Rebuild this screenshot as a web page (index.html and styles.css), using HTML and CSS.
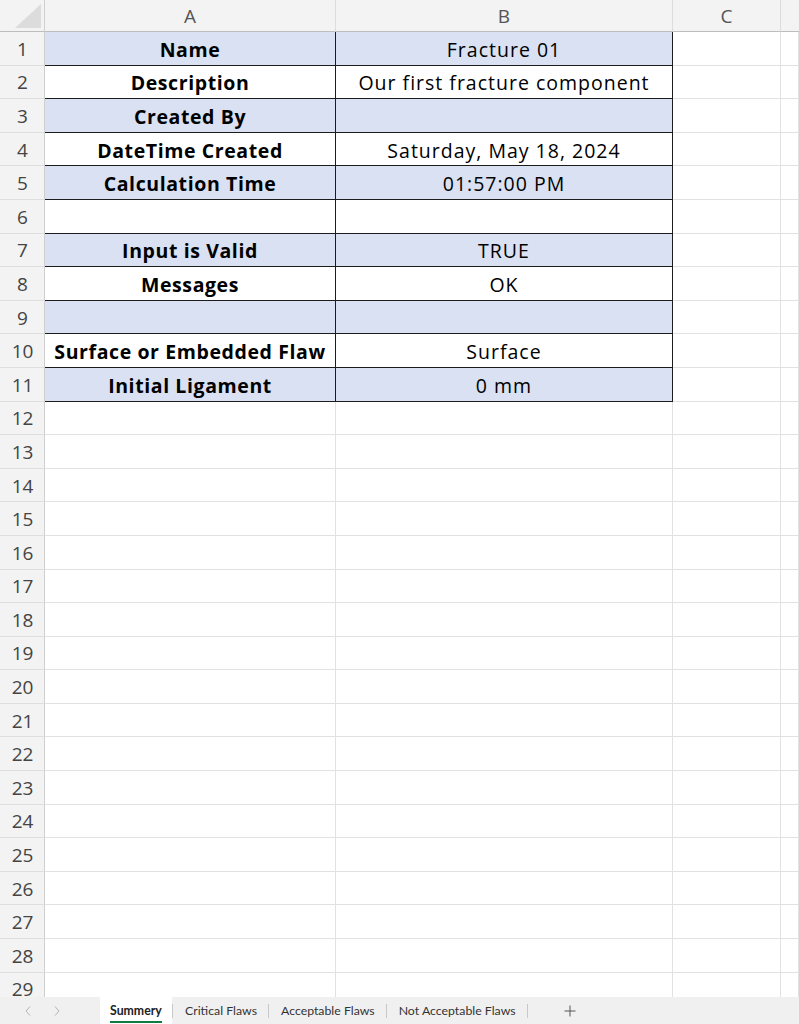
FILE: index.html
```html
<!DOCTYPE html>
<html>
<head>
<meta charset="utf-8">
<link rel="stylesheet" href="styles.css">
</head>
<body>
<div class="app">
  <div class="sheet">
    <div class="corner"><span class="tri"></span></div>
    <div class="colhead">A</div>
    <div class="colhead">B</div>
    <div class="colhead">C</div>
    <div class="colhead last"></div>

    <div class="rowhead">1</div><div class="cell data blue label">Name</div><div class="cell data blue">Fracture 01</div><div class="cell"></div><div class="cell"></div>
    <div class="rowhead">2</div><div class="cell data label">Description</div><div class="cell data">Our first fracture component</div><div class="cell"></div><div class="cell"></div>
    <div class="rowhead">3</div><div class="cell data blue label">Created By</div><div class="cell data blue"></div><div class="cell"></div><div class="cell"></div>
    <div class="rowhead">4</div><div class="cell data label">DateTime Created</div><div class="cell data">Saturday, May 18, 2024</div><div class="cell"></div><div class="cell"></div>
    <div class="rowhead">5</div><div class="cell data blue label">Calculation Time</div><div class="cell data blue">01:57:00 PM</div><div class="cell"></div><div class="cell"></div>
    <div class="rowhead">6</div><div class="cell data label"></div><div class="cell data"></div><div class="cell"></div><div class="cell"></div>
    <div class="rowhead">7</div><div class="cell data blue label">Input is Valid</div><div class="cell data blue">TRUE</div><div class="cell"></div><div class="cell"></div>
    <div class="rowhead">8</div><div class="cell data label">Messages</div><div class="cell data">OK</div><div class="cell"></div><div class="cell"></div>
    <div class="rowhead">9</div><div class="cell data blue label"></div><div class="cell data blue"></div><div class="cell"></div><div class="cell"></div>
    <div class="rowhead">10</div><div class="cell data label">Surface or Embedded Flaw</div><div class="cell data">Surface</div><div class="cell"></div><div class="cell"></div>
    <div class="rowhead">11</div><div class="cell data blue label">Initial Ligament</div><div class="cell data blue">0 mm</div><div class="cell"></div><div class="cell"></div>

    <div class="rowhead">12</div><div class="cell"></div><div class="cell"></div><div class="cell"></div><div class="cell"></div>
    <div class="rowhead">13</div><div class="cell"></div><div class="cell"></div><div class="cell"></div><div class="cell"></div>
    <div class="rowhead">14</div><div class="cell"></div><div class="cell"></div><div class="cell"></div><div class="cell"></div>
    <div class="rowhead">15</div><div class="cell"></div><div class="cell"></div><div class="cell"></div><div class="cell"></div>
    <div class="rowhead">16</div><div class="cell"></div><div class="cell"></div><div class="cell"></div><div class="cell"></div>
    <div class="rowhead">17</div><div class="cell"></div><div class="cell"></div><div class="cell"></div><div class="cell"></div>
    <div class="rowhead">18</div><div class="cell"></div><div class="cell"></div><div class="cell"></div><div class="cell"></div>
    <div class="rowhead">19</div><div class="cell"></div><div class="cell"></div><div class="cell"></div><div class="cell"></div>
    <div class="rowhead">20</div><div class="cell"></div><div class="cell"></div><div class="cell"></div><div class="cell"></div>
    <div class="rowhead">21</div><div class="cell"></div><div class="cell"></div><div class="cell"></div><div class="cell"></div>
    <div class="rowhead">22</div><div class="cell"></div><div class="cell"></div><div class="cell"></div><div class="cell"></div>
    <div class="rowhead">23</div><div class="cell"></div><div class="cell"></div><div class="cell"></div><div class="cell"></div>
    <div class="rowhead">24</div><div class="cell"></div><div class="cell"></div><div class="cell"></div><div class="cell"></div>
    <div class="rowhead">25</div><div class="cell"></div><div class="cell"></div><div class="cell"></div><div class="cell"></div>
    <div class="rowhead">26</div><div class="cell"></div><div class="cell"></div><div class="cell"></div><div class="cell"></div>
    <div class="rowhead">27</div><div class="cell"></div><div class="cell"></div><div class="cell"></div><div class="cell"></div>
    <div class="rowhead">28</div><div class="cell"></div><div class="cell"></div><div class="cell"></div><div class="cell"></div>
    <div class="rowhead">29</div><div class="cell"></div><div class="cell"></div><div class="cell"></div><div class="cell"></div>
  </div>
  <div class="tabbar">
    <div class="nav">
      <svg width="10" height="12" viewBox="0 0 10 12"><path d="M7 1.5 L3 6 L7 10.5" fill="none" stroke="#b4b4b4" stroke-width="1"/></svg>
      <svg width="10" height="12" viewBox="0 0 10 12"><path d="M3 1.5 L7 6 L3 10.5" fill="none" stroke="#b4b4b4" stroke-width="1"/></svg>
    </div>
    <div class="tab active"><span class="tabtext">Summery</span></div>
    <span class="sep"></span>
    <div class="tab">Critical Flaws</div>
    <span class="sep"></span>
    <div class="tab">Acceptable Flaws</div>
    <span class="sep"></span>
    <div class="tab">Not Acceptable Flaws</div>
    <span class="sep"></span>
    <div class="add">
      <svg width="12" height="12" viewBox="0 0 12 12"><path d="M6 0.5 V11.5 M0.5 6 H11.5" stroke="#555" stroke-width="1"/></svg>
    </div>
  </div>
</div>
</body>
</html>
```
FILE: styles.css
```css
* { box-sizing: border-box; }
html, body { margin: 0; padding: 0; background: #fff; }
.app {
  width: 799px;
  height: 1024px;
  display: flex;
  flex-direction: column;
  overflow: hidden;
  font-family: Lato, "Liberation Sans", sans-serif;
}
.sheet {
  flex: 1;
  min-height: 0;
  overflow: hidden;
  display: grid;
  grid-template-columns: 45px 291px 337px 108px 1fr;
  grid-template-rows: 32px repeat(29, 33.6px);
}
.corner {
  background: #f3f3f3;
  border-right: 1px solid #cfcfcf;
  border-bottom: 1px solid #bdbdbd;
  position: relative;
}
.tri {
  position: absolute;
  right: 3px;
  bottom: 3px;
  width: 0;
  height: 0;
  border-left: 26px solid transparent;
  border-bottom: 24px solid #dcdcdc;
}
.colhead {
  background: #f3f3f3;
  border-right: 1px solid #dcdcdc;
  border-bottom: 1px solid #bdbdbd;
  color: #555;
  font-family: "Open Sans", sans-serif;
  font-size: 19px;
  display: flex;
  align-items: center;
  justify-content: center;
  padding-top: 1px;
}
.colhead.last { border-right: none; }
.rowhead {
  background: #f3f3f3;
  border-right: 1px solid #cfcfcf;
  border-bottom: 1px solid #dedede;
  color: #444;
  font-family: "Open Sans", sans-serif;
  font-size: 19px;
  display: flex;
  align-items: center;
  justify-content: center;
  padding-top: 1px;
  padding-left: 1px;
}
.cell {
  border-right: 1px solid #e1e1e1;
  border-bottom: 1px solid #e1e1e1;
  background: #fff;
  color: #000;
  font-family: "Open Sans", sans-serif;
  font-size: 19.5px;
  letter-spacing: 1px;
  display: flex;
  align-items: center;
  justify-content: center;
  white-space: nowrap;
  padding-top: 2px;
}
.cell.data {
  border-right-color: #1c1c1c;
  border-bottom-color: #1c1c1c;
}
.cell.blue { background: #d9e1f2; }
.cell.label { font-weight: 700; letter-spacing: 0.6px; }

.tabbar {
  height: 27px;
  flex: none;
  background: #f0f0f0;
  display: flex;
  align-items: stretch;
  font-size: 12.3px;
  color: #333;
}
.nav {
  width: 100px;
  display: flex;
  align-items: center;
  gap: 19px;
  padding-left: 23px;
}
.tab {
  display: flex;
  align-items: center;
  padding: 0 11px 0 12px;
}
.tab.active {
  background: #fff;
  padding: 0 8px 0 10px;
  width: 72px;
  font-weight: 700;
  color: #222;
}
.tabtext {
  position: relative;
  display: inline-block;
}
.tabtext::after {
  content: "";
  position: absolute;
  left: 0;
  right: 0;
  bottom: -5px;
  height: 2px;
  background: #107c41;
}
.sep {
  align-self: center;
  width: 1px;
  height: 14px;
  background: #c8c8c8;
}
.add {
  display: flex;
  align-items: center;
  padding-left: 36px;
}
```
